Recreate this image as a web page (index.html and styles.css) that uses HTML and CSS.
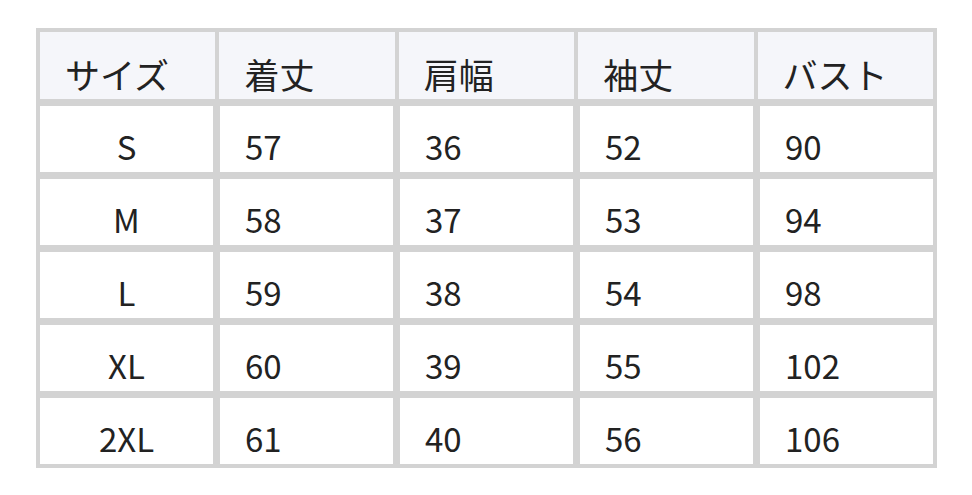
FILE: index.html
```html
<!DOCTYPE html>
<html lang="ja">
<head>
<meta charset="utf-8">
<title>サイズ表</title>
<link rel="stylesheet" href="styles.css">
</head>
<body>
<div class="sheet">
  <div class="head">
    <div class="hcell">サイズ</div>
    <div class="hcell">着丈</div>
    <div class="hcell">肩幅</div>
    <div class="hcell">袖丈</div>
    <div class="hcell">バスト</div>
  </div>
  <div class="body">
    <div class="cell size">S</div><div class="cell">57</div><div class="cell">36</div><div class="cell">52</div><div class="cell">90</div>
    <div class="cell size">M</div><div class="cell">58</div><div class="cell">37</div><div class="cell">53</div><div class="cell">94</div>
    <div class="cell size">L</div><div class="cell">59</div><div class="cell">38</div><div class="cell">54</div><div class="cell">98</div>
    <div class="cell size">XL</div><div class="cell">60</div><div class="cell">39</div><div class="cell">55</div><div class="cell">102</div>
    <div class="cell size">2XL</div><div class="cell">61</div><div class="cell">40</div><div class="cell">56</div><div class="cell">106</div>
  </div>
</div>
</body>
</html>
```
FILE: styles.css
```css
html, body {
  margin: 0;
  padding: 0;
  background: #ffffff;
}
body {
  padding: 28px 0 0 36px;
  font-family: "Noto Sans CJK JP", "Noto Sans", sans-serif;
  color: #222222;
}
.sheet {
  width: 893px;
  padding: 4px;
  background: #d3d3d3;
}
.head {
  display: grid;
  grid-template-columns: repeat(5, 1fr);
  column-gap: 4px;
}
.hcell {
  height: 67px;
  box-sizing: border-box;
  background: #f5f6fa;
  padding: 14px 0 0 25px;
  font-size: 35px;
  line-height: 56px;
}
.body {
  margin-top: 7px;
  display: grid;
  grid-template-columns: repeat(5, 1fr);
  column-gap: 7px;
  row-gap: 7px;
}
.cell {
  height: 66px;
  box-sizing: border-box;
  background: #ffffff;
  padding: 14px 0 0 25px;
  font-size: 33px;
  line-height: 52px;
}
.cell.size {
  padding-left: 0;
  text-align: center;
}
```
